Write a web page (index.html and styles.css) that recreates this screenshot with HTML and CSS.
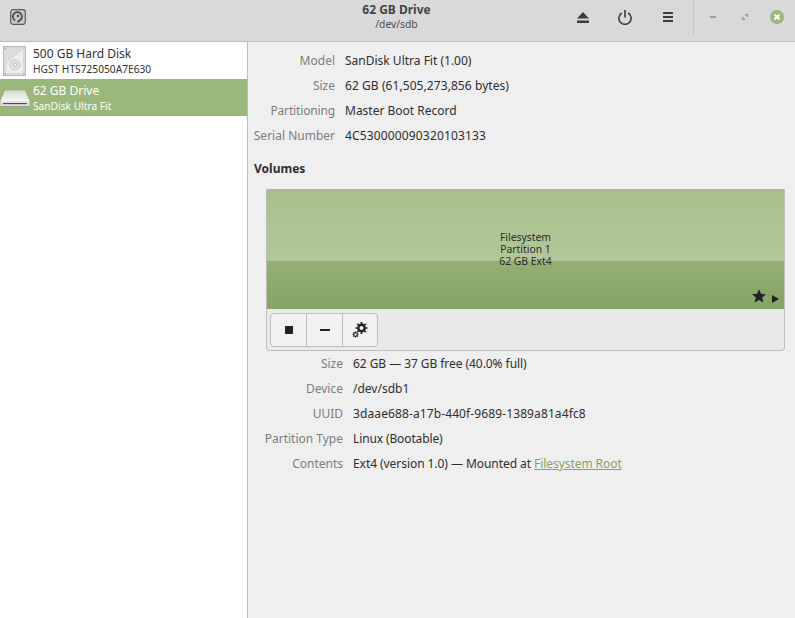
FILE: index.html
```html
<!DOCTYPE html>
<html lang="en">
<head>
<meta charset="utf-8">
<title>62 GB Drive</title>
<link rel="stylesheet" href="styles.css">
</head>
<body>
<div class="window">
  <header class="titlebar">
    <div class="title-left">
      <svg class="app-icon" width="16" height="16" viewBox="0 0 16 16">
        <rect x="0.7" y="0.7" width="14.6" height="14.6" rx="2.5" fill="#c9c9c9" stroke="#5a5a5a" stroke-width="1.2"/>
        <path d="M5.2 11.5 A4.5 4.5 0 1 1 10.5 10.8 L7.5 13" fill="none" stroke="#4a4a4a" stroke-width="1.7"/>
        <circle cx="8" cy="7" r="1.2" fill="#4a4a4a"/>
      </svg>
    </div>
    <div class="title-center">
      <div class="title-main">62 GB Drive</div>
      <div class="title-sub">/dev/sdb</div>
    </div>
    <div class="title-right">
      <svg class="eject" width="12" height="11" viewBox="0 0 12 11"><path d="M6 0 L12 6.5 H0 Z" fill="#3c3c3c"/><rect y="8.5" width="12" height="2.5" fill="#3c3c3c"/></svg>
      <svg class="power" width="14" height="15" viewBox="0 0 14 15"><path d="M3.8 3 A6.1 6.1 0 1 0 10.2 3" fill="none" stroke="#3c3c3c" stroke-width="1.6"/><rect x="6.2" y="0" width="1.6" height="7.5" fill="#3c3c3c"/></svg>
      <svg class="menu" width="10" height="10" viewBox="0 0 10 10"><rect width="10" height="2" fill="#3c3c3c"/><rect y="4" width="10" height="2" fill="#3c3c3c"/><rect y="8" width="10" height="2" fill="#3c3c3c"/></svg>
      <div class="tb-sep"></div>
      <svg class="win-min" width="6" height="2" viewBox="0 0 6 2"><rect width="6" height="2" fill="#9a9da3"/></svg>
      <svg class="win-max" width="6" height="6" viewBox="0 0 6 6"><path d="M2.2 0 H6 V3.8 Z M0 2.2 L3.8 6 H0 Z" fill="#9a9da3"/></svg>
      <svg class="win-close" width="14" height="14" viewBox="0 0 14 14"><circle cx="7" cy="7" r="7" fill="#9ab87a"/><path d="M4.5 4.5 L9.5 9.5 M9.5 4.5 L4.5 9.5" stroke="#fff" stroke-width="2"/></svg>
    </div>
  </header>
  <div class="body">
    <aside class="sidebar">
      <div class="drive">
        <svg class="drive-icon" width="23" height="30" viewBox="0 0 23 30">
          <rect x="0.5" y="0.5" width="22" height="29" fill="#dcdcdc" stroke="#b8b8b8"/>
          <path d="M20.5 2.5 V27.5 H3 V17 Z" fill="#eeeeee" stroke="#cfcfcf" stroke-width="0.6"/>
          <circle cx="12" cy="19" r="5" fill="#e6e6e6" stroke="#c2c2c2"/>
          <circle cx="12" cy="19" r="2" fill="#f2f2f2" stroke="#bdbdbd"/>
          <rect x="1.5" y="1.5" width="1.5" height="1.5" fill="#a9a9a9"/>
          <rect x="20" y="27" width="1.5" height="1.5" fill="#a9a9a9"/>
          <rect x="1.5" y="27" width="1.5" height="1.5" fill="#a9a9a9"/>
        </svg>
        <div class="drive-text">
          <div class="drive-name">500 GB Hard Disk</div>
          <div class="drive-model">HGST HTS725050A7E630</div>
        </div>
      </div>
      <div class="drive selected">
        <svg class="drive-icon usb" width="30" height="17" viewBox="0 0 30 17">
          <defs><linearGradient id="usbTop" x1="0" y1="0" x2="0" y2="1"><stop offset="0" stop-color="#d8d8d4"/><stop offset="1" stop-color="#f6f6f4"/></linearGradient></defs>
          <path d="M5 0.5 H25 L29.5 11 H0.5 Z" fill="url(#usbTop)"/>
          <path d="M0.5 11 H29.5 V15 Q29.5 16.5 28 16.5 H2 Q0.5 16.5 0.5 15 Z" fill="#e4e4e0"/>
          <rect x="3" y="13" width="24" height="1.2" fill="#4e4e4c"/>
          <rect x="1" y="16" width="28" height="0.8" fill="#8f8f8a"/>
        </svg>
        <div class="drive-text">
          <div class="drive-name">62 GB Drive</div>
          <div class="drive-model">SanDisk Ultra Fit</div>
        </div>
      </div>
    </aside>
    <main class="content">
      <dl class="props top">
        <dt>Model</dt><dd>SanDisk Ultra Fit (1.00)</dd>
        <dt>Size</dt><dd class="loose">62 GB (61,505,273,856 bytes)</dd>
        <dt class="label-tight">Partitioning</dt><dd>Master Boot Record</dd>
        <dt>Serial Number</dt><dd class="digits">4C530000090320103133</dd>
      </dl>
      <h2 class="volumes-title">Volumes</h2>
      <section class="volume-box">
        <div class="volume-bar">
          <div class="volume-label">Filesystem<br>Partition 1<br>62 GB Ext4</div>
          <div class="volume-marks">
            <svg width="14" height="14" viewBox="0 0 14 14"><path d="M7 0 L9 4.8 L14 5.2 L10.2 8.5 L11.4 13.6 L7 10.9 L2.6 13.6 L3.8 8.5 L0 5.2 L5 4.8 Z" fill="#222"/></svg>
            <svg width="7" height="8" viewBox="0 0 7 8"><path d="M0 0 L7 4 L0 8 Z" fill="#222"/></svg>
          </div>
        </div>
        <div class="toolbar">
          <div class="tool-group">
            <button class="tool"><svg width="8" height="8" viewBox="0 0 8 8"><rect width="8" height="8" fill="#222"/></svg></button>
            <button class="tool"><svg width="10" height="2" viewBox="0 0 10 2"><rect width="10" height="2" fill="#222"/></svg></button>
            <button class="tool"><svg width="16" height="16" viewBox="0 0 16 16"><g fill="none" stroke="#222"><circle cx="9.5" cy="6" r="3.2" stroke-width="2.4"/><path d="M9.5 0 V2 M9.5 10 V12 M3.5 6 H5.5 M13.5 6 H15.5 M5.3 1.8 L6.7 3.2 M12.3 8.8 L13.7 10.2 M13.7 1.8 L12.3 3.2 M6.7 8.8 L5.3 10.2" stroke-width="1.7"/><circle cx="3.5" cy="12.5" r="1.9" stroke-width="1.2"/><path d="M3.5 9.5 V10.6 M3.5 14.4 V15.5 M0.5 12.5 H1.6 M5.4 12.5 H6.5 M1.4 10.4 L2.2 11.2 M5.6 14.6 L4.8 13.8 M1.4 14.6 L2.2 13.8" stroke-width="1"/></g></svg></button>
          </div>
        </div>
      </section>
      <dl class="props bottom">
        <dt>Size</dt><dd class="tight">62 GB — 37 GB free (40.0% full)</dd>
        <dt>Device</dt><dd>/dev/sdb1</dd>
        <dt>UUID</dt><dd class="uuid">3daae688-a17b-440f-9689-1389a81a4fc8</dd>
        <dt>Partition Type</dt><dd class="tighter">Linux (Bootable)</dd>
        <dt>Contents</dt><dd class="tight">Ext4 (version 1.0) — Mounted at <a class="link" href="#">Filesystem Root</a></dd>
      </dl>
    </main>
  </div>
</div>
</body>
</html>
```
FILE: styles.css
```css
* { box-sizing: border-box; }
html, body { margin: 0; padding: 0; height: 100%; }
body { font-family: "Noto Sans", sans-serif; font-size: 12px; color: #2e2e2e; background: #efefef; overflow: hidden; }
.window { display: flex; flex-direction: column; width: 795px; height: 618px; }
.titlebar { height: 42px; flex: none; display: flex; align-items: flex-start; background: #d9d9d9; border-bottom: 1px solid #bcbcbc; }
.title-left { padding: 9px 0 0 10px; width: 300px; flex: none; }
.app-icon { display: block; }
.title-center { flex: 1; text-align: center; line-height: 15px; padding: 2px 2px 0 0; }
.title-main { font-weight: 700; color: #444; font-size: 12px; }
.title-sub { font-size: 10.3px; color: #4a4a4a; }
.title-right { width: 300px; flex: none; display: flex; align-items: center; height: 34px; }
.eject { margin-left: 82px; }
.power { margin-left: 29px; }
.menu { margin-left: 31px; }
.tb-sep { margin-left: 20px; align-self: flex-start; height: 35px; width: 1px; background: #c4c4c4; }
.win-min { margin-left: 16px; }
.win-max { margin-left: 26px; }
.win-close { margin-left: 22px; }
.body { flex: 1; display: flex; min-height: 0; }
.sidebar { width: 248px; flex: none; background: #fff; border-right: 1px solid #bcbcbc; }
.drive { height: 37px; display: flex; align-items: center; }
.drive-icon { flex: none; margin-left: 3px; }
.drive-icon.usb { margin-left: 0; margin-top: 1px; }
.drive-text { margin-left: 7px; }
.drive.selected .drive-text { margin-left: 3px; }
.drive-name { font-size: 12px; line-height: 17px; color: #333; }
.drive-model { font-size: 10.2px; line-height: 14px; color: #333; }
.selected { background: #9ab87a; }
.selected .drive-name, .selected .drive-model { color: #fff; }
.content { flex: 1; min-width: 0; padding-top: 6px; }
.props { display: grid; margin: 0; grid-auto-rows: 25px; align-items: center; column-gap: 10px; }
.props dt { text-align: right; color: #7d7d7d; }
.props dd { margin: 0; color: #2e2e2e; }
.top { grid-template-columns: 87px 1fr; }
.bottom { grid-template-columns: 95px 1fr; }
.props .label-tight { letter-spacing: -0.15px; }
.loose { letter-spacing: 0.07px; }
.digits { letter-spacing: 0.15px; }
.uuid { letter-spacing: 0.11px; }
.tight { letter-spacing: -0.06px; }
.tighter { letter-spacing: -0.12px; }
.volumes-title { font-size: 12px; font-weight: 700; margin: 12px 0 0 6px; line-height: 17px; color: #2e2e2e; }
.volume-box { margin: 12px 10px 0 18px; border: 1px solid #bdbdbd; border-top: 0; border-radius: 0 0 4px 4px; background: #e9e9e9; height: 162px; }
.volume-bar { height: 120px; position: relative; display: flex; align-items: center; justify-content: center; background: linear-gradient(180deg, #a8bf8c 0%, #b2c89a 59.5%, #93af72 60%, #86a466 100%); }
.volume-label { text-align: center; font-size: 10.4px; line-height: 12px; color: #2b2b2b; }
.volume-marks { position: absolute; right: 5px; bottom: 6px; display: flex; align-items: flex-end; gap: 6px; }
.toolbar { padding: 4px 3px 0; }
.tool-group { display: inline-flex; border: 1px solid #bdbdbd; border-radius: 4px; background: #f2f2f2; height: 34px; }
.tool { width: 36px; border: 0; border-right: 1px solid #bdbdbd; background: transparent; padding: 0; display: flex; align-items: center; justify-content: center; }
.tool:last-child { border-right: 0; width: 34px; }
.link { color: #84a363; text-decoration: underline; }
```
